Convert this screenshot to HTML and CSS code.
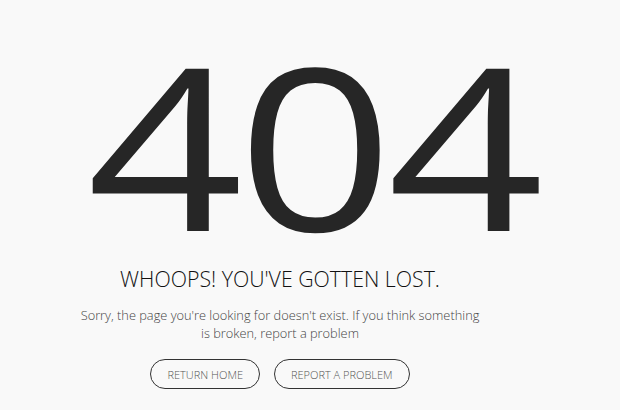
FILE: index.html
```html
<!DOCTYPE html>
<html>
<head>
<meta charset="utf-8">
<link rel="stylesheet" href="styles.css">
</head>
<body>
<main class="page">
  <h1 class="code"><span class="code-text">404</span></h1>
  <h2 class="title">WHOOPS! YOU'VE GOTTEN LOST.</h2>
  <p class="desc">Sorry, the page you're looking for doesn't exist. If you think something is broken, report a problem</p>
  <div class="actions">
    <a class="btn btn-home" href="#">RETURN HOME</a>
    <a class="btn btn-report" href="#">REPORT A PROBLEM</a>
  </div>
</main>
</body>
</html>
```
FILE: styles.css
```css
html, body {
  margin: 0;
  padding: 0;
  background: #f9f9f9;
}
body {
  font-family: "Open Sans", "Liberation Sans", sans-serif;
  color: #222;
  width: 620px;
  height: 410px;
  overflow: hidden;
}
.page {
  width: 560px;
  display: flex;
  flex-direction: column;
  align-items: center;
}
.code {
  margin: 0;
  padding-left: 64px;
  font-size: 226px;
  font-weight: 400;
  line-height: 226px;
  height: 226px;
  color: #262626;
  margin-top: 30px;
}
.code-text {
  display: inline-block;
  transform: scaleX(1.21);
  letter-spacing: -5px;
}
.title {
  margin: 9px 0 0;
  font-size: 21.3px;
  font-weight: 300;
  line-height: 28px;
  color: #111;
}
.desc {
  margin: 13px 0 0;
  width: 402px;
  text-align: center;
  font-size: 12.8px;
  font-weight: 300;
  line-height: 18px;
  color: #444;
}
.actions {
  display: flex;
  gap: 14px;
  margin-top: 17px;
}
.btn {
  box-sizing: border-box;
  display: inline-flex;
  align-items: center;
  justify-content: center;
  height: 30px;
  padding: 0 16px;
  border: 1.5px solid #333;
  border-radius: 16px;
  font-size: 11px;
  font-weight: 300;
  color: #555;
  text-decoration: none;
}
```
